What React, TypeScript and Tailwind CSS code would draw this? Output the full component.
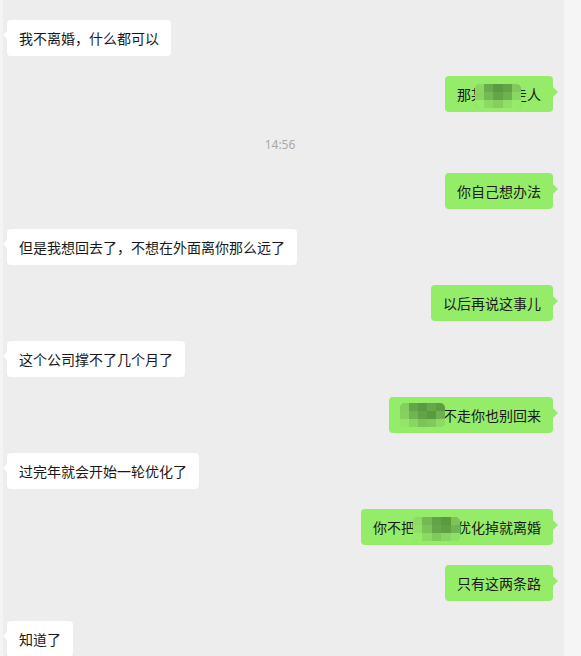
const font = "font-['Noto_Sans_CJK_SC','Noto_Sans',sans-serif]";

// pixelated cover that hides part of a message
function Mosaic({ pos, cells }: { pos: string; cells: string[] }) {
  return (
    <div className={`absolute ${pos} grid grid-cols-5 rounded-[5px] overflow-hidden bg-[#7cc358]`}>
      {cells.map((c, i) => (
        <div key={i} className={`h-[8px] ${c}`} />
      ))}
    </div>
  );
}

function Left({ text }: { text: string }) {
  return (
    <div className="flex mt-5">
      <div className="relative flex items-center h-9 px-3 rounded-[4px] bg-white text-[14px] leading-none text-[#191919]">
        <span className="absolute -left-[4px] top-[11px] w-0 h-0 border-y-[4px] border-y-transparent border-r-[4px] border-r-white" />
        {text}
      </div>
    </div>
  );
}

function Right({ children, mosaic }: { children: React.ReactNode; mosaic?: React.ReactNode }) {
  return (
    <div className="flex justify-end mt-5">
      <div className="relative flex items-center h-9 px-3 rounded-[4px] bg-[#95ec69] text-[14px] leading-none text-[#191919]">
        <span className="absolute -right-[5px] top-[11px] w-0 h-0 border-y-[5px] border-y-transparent border-l-[5px] border-l-[#95ec69]" />
        {children}
        {mosaic}
      </div>
    </div>
  );
}

const m1 = ["bg-[#8ad862]", "bg-[#6aac4b]", "bg-[#5a9a40]", "bg-[#62a346]", "bg-[#80c95b]",
  "bg-[#88d662]", "bg-[#74b954]", "bg-[#64a647]", "bg-[#6eb24f]", "bg-[#8ad862]",
  "bg-[#95ec69]", "bg-[#8cda64]", "bg-[#84cf5e]", "bg-[#90e067]", "bg-[#95ec69]"];
const m2 = ["bg-[#84cf5e]", "bg-[#64a647]", "bg-[#5a9a40]", "bg-[#66a848]", "bg-[#5e9e43]",
  "bg-[#86d15f]", "bg-[#70b551]", "bg-[#62a346]", "bg-[#5a9a40]", "bg-[#6eb24f]",
  "bg-[#93e668]", "bg-[#88d662]", "bg-[#7cc358]", "bg-[#80c95b]", "bg-[#8ddb65]"];
const m3 = ["bg-[#8ddb65]", "bg-[#74b954]", "bg-[#62a346]", "bg-[#5a9a40]", "bg-[#7cc358]",
  "bg-[#90e067]", "bg-[#7cc358]", "bg-[#66a848]", "bg-[#60a145]", "bg-[#70b551]",
  "bg-[#95ec69]", "bg-[#8cda64]", "bg-[#80c95b]", "bg-[#88d662]", "bg-[#90e067]"];

export default function App() {
  return (
    <div className={`flex w-[581px] h-[656px] overflow-hidden ${font}`}>
      <div className="w-[3px] bg-[#f4f4f4]" />
      <div className="flex-1 flex flex-col bg-[#ededed] pl-1 pr-[11px]">
        <Left text="我不离婚，什么都可以" />
        <Right mosaic={<Mosaic pos="left-[30px] top-[8px] w-[46px] h-[24px]" cells={m1} />}>
          那某某某走人
        </Right>
        <div className="mt-[22px] h-[21px] leading-[21px] text-center text-[12px] text-[#a9a9a9] font-['Noto_Sans',sans-serif]">
          14:56
        </div>
        <div className="-mt-[2px]">
          <Right>你自己想办法</Right>
        </div>
        <Left text="但是我想回去了，不想在外面离你那么远了" />
        <Right>以后再说这事儿</Right>
        <Left text="这个公司撑不了几个月了" />
        <Right mosaic={<Mosaic pos="left-[11px] top-[6px] w-[45px] h-[24px]" cells={m2} />}>
          某某某不走你也别回来
        </Right>
        <Left text="过完年就会开始一轮优化了" />
        <Right mosaic={<Mosaic pos="left-[52px] top-[8px] w-[47px] h-[24px]" cells={m3} />}>
          你不把某某某优化掉就离婚
        </Right>
        <Right>只有这两条路</Right>
        <Left text="知道了" />
      </div>
      <div className="w-[17px] bg-[#f5f5f5]" />
    </div>
  );
}
